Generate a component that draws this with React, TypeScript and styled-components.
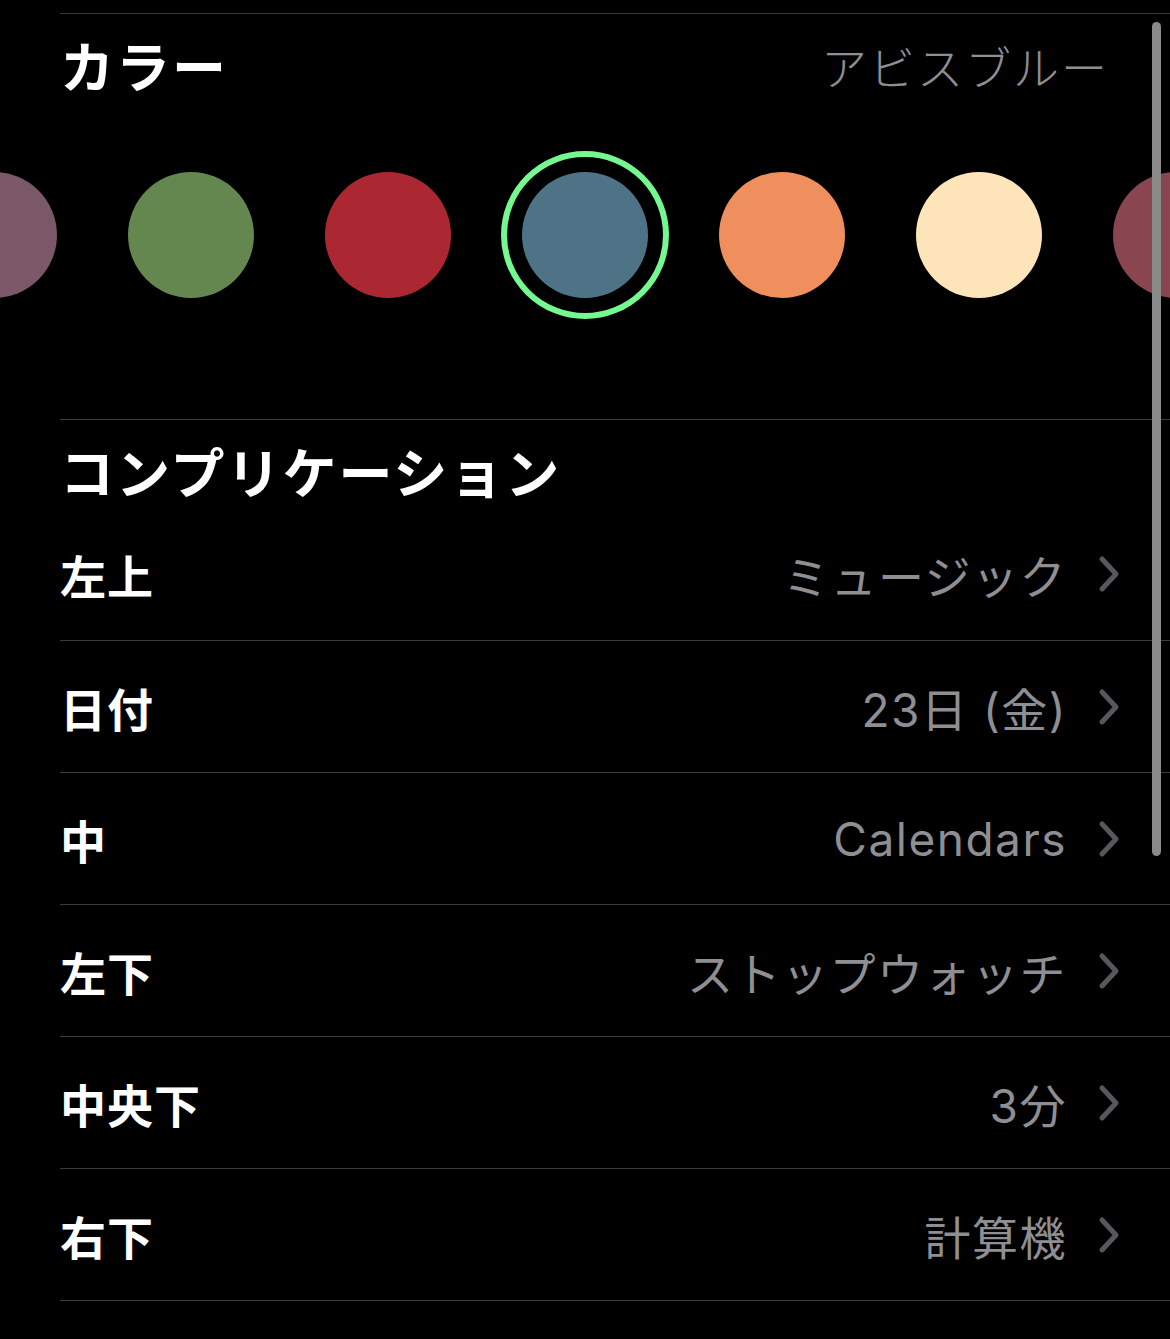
import styled, { createGlobalStyle } from "styled-components";

const GlobalStyle = createGlobalStyle`
  html, body {
    margin: 0;
    padding: 0;
    background: #000;
  }
  body {
    font-family: "Inter", "Noto Sans CJK JP", sans-serif;
    -webkit-font-smoothing: antialiased;
  }
`;

interface Swatch {
  color: string;
  selected?: boolean;
}

const swatches: Swatch[] = [
  { color: "#7a5867" },
  { color: "#63874f" },
  { color: "#ab2832" },
  { color: "#4e7386", selected: true },
  { color: "#ee8f5d" },
  { color: "#fde5b9" },
  { color: "#894550" },
];

const complications = [
  { label: "左上", value: "ミュージック" },
  { label: "日付", value: "23日 (金)" },
  { label: "中", value: "Calendars" },
  { label: "左下", value: "ストップウォッチ" },
  { label: "中央下", value: "3分" },
  { label: "右下", value: "計算機" },
];

function Chevron() {
  return (
    <ChevronIcon width="22" height="38" viewBox="0 0 22 38" fill="none">
      <path
        d="M4 4 L18 19 L4 34"
        stroke="#58585c"
        strokeWidth="5"
        strokeLinecap="round"
        strokeLinejoin="round"
      />
    </ChevronIcon>
  );
}

function App() {
  return (
    <Page>
      <GlobalStyle />
      <ScrollThumb />

      <TitleRow>
        <SectionTitle>カラー</SectionTitle>
        <SelectedName>アビスブルー</SelectedName>
      </TitleRow>
      <SwatchStrip>
        {swatches.map((s, i) => (
          <SwatchRing key={i} $selected={!!s.selected}>
            <SwatchDot $color={s.color} />
          </SwatchRing>
        ))}
      </SwatchStrip>

      <ListSection>
        <ListHeader>
          <SectionTitle>コンプリケーション</SectionTitle>
        </ListHeader>
        {complications.map((c, i) => (
          <Row key={c.label} $first={i === 0}>
            <RowLabel>{c.label}</RowLabel>
            <RowValue>{c.value}</RowValue>
            <Chevron />
          </Row>
        ))}
      </ListSection>
    </Page>
  );
}
export default App;

const Page = styled.div`
  position: relative;
  width: 1170px;
  height: 1339px;
  overflow: hidden;
  background: #000;
  padding-top: 13px;
  box-sizing: border-box;
`;

const ScrollThumb = styled.div`
  position: absolute;
  top: 22px;
  left: 1152px;
  width: 9px;
  height: 834px;
  border-radius: 5px;
  background: #8a8a8a;
  z-index: 2;
`;

const TitleRow = styled.div`
  margin-left: 60px;
  padding-right: 61px;
  padding-bottom: 8px;
  height: 102px;
  border-top: 1px solid #3a3a3c;
  display: flex;
  align-items: center;
  justify-content: space-between;
`;

const SectionTitle = styled.h2`
  margin: 0;
  font-family: "Noto Sans CJK JP", sans-serif;
  font-size: 54px;
  font-weight: 700;
  line-height: 64px;
  color: #fff;
  letter-spacing: 2px;
`;

const SelectedName = styled.span`
  font-family: "Noto Sans CJK JP", sans-serif;
  font-size: 46px;
  font-weight: 300;
  color: #8e8e93;
  letter-spacing: 2px;
`;

const SwatchStrip = styled.div`
  display: flex;
  align-items: center;
  gap: 29px;
  margin-left: -90px;
  margin-top: 27px;
  height: 168px;
  padding-bottom: 100px;
`;

const SwatchRing = styled.div<{ $selected: boolean }>`
  flex: none;
  width: 168px;
  height: 168px;
  box-sizing: border-box;
  border-radius: 50%;
  border: 6px solid ${p => (p.$selected ? "#74f88f" : "transparent")};
  display: flex;
  align-items: center;
  justify-content: center;
`;

const SwatchDot = styled.div<{ $color: string }>`
  width: 126px;
  height: 126px;
  border-radius: 50%;
  background: ${p => p.$color};
`;

const ListSection = styled.div`
  margin-left: 60px;
  border-top: 1px solid #3a3a3c;
`;

const ListHeader = styled.div`
  height: 88px;
  padding-top: 19px;
  box-sizing: border-box;
`;

const Row = styled.div<{ $first: boolean }>`
  height: ${p => (p.$first ? "132px" : "131px")};
  display: flex;
  align-items: center;
  padding-right: 50px;
  border-top: ${p => (p.$first ? "none" : "1px solid #3a3a3c")};
  &:last-child {
    border-bottom: 1px solid #3a3a3c;
  }
`;

const RowLabel = styled.span`
  flex: 1;
  font-family: "Noto Sans CJK JP", sans-serif;
  font-size: 46px;
  font-weight: 700;
  color: #fff;
  letter-spacing: 1px;
`;

const RowValue = styled.span`
  font-size: 46px;
  font-weight: 400;
  color: #8e8e93;
  letter-spacing: 1.5px;
  margin-right: 31px;
`;

const ChevronIcon = styled.svg`
  flex: none;
  display: block;
`;
